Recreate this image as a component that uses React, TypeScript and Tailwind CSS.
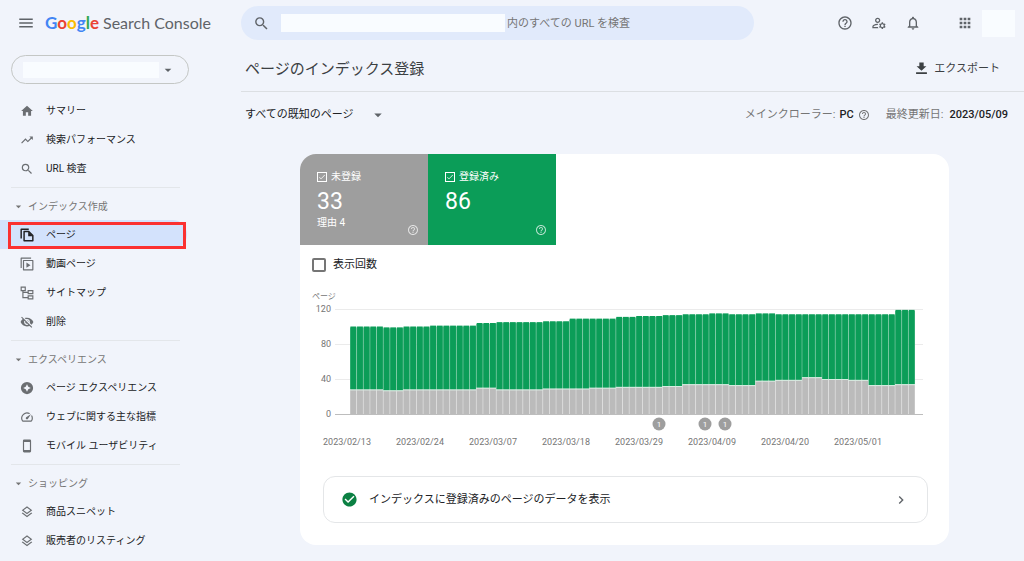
import type { ReactNode } from 'react';
import clsx from 'clsx';
import type { IconType } from 'react-icons';
import {
  MdApps,
  MdArrowDropDown,
  MdCheck,
  MdCheckCircle,
  MdChevronRight,
  MdHelpOutline,
  MdHome,
  MdMenu,
  MdNotificationsNone,
  MdOutlineLayers,
  MdOutlineManageAccounts,
  MdSearch,
  MdSpeed,
  MdTrendingUp,
  MdVisibilityOff,
} from 'react-icons/md';

type IconProps = { className?: string };

function PagesIcon({ className }: IconProps) {
  return (
    <svg className={className} viewBox="0 0 24 24" fill="none" stroke="currentColor" strokeWidth="2.500">
      <path d="M2 18V2h13" strokeLinejoin="round" />
      <path d="M7 6h8l7 7v9H7z" strokeLinejoin="round" />
      <path d="M14 6v8h8z" fill="currentColor" stroke="none" />
    </svg>
  );
}

function VideoPagesIcon({ className }: IconProps) {
  return (
    <svg className={className} viewBox="0 0 24 24" fill="none" stroke="currentColor" strokeWidth="2">
      <path d="M2 19V2h17" strokeLinejoin="round" />
      <path d="M6 6h16v16H6z" strokeLinejoin="round" />
      <path d="M11 9.500v9l7-4.500z" fill="currentColor" stroke="none" />
    </svg>
  );
}

function SitemapIcon({ className }: IconProps) {
  return (
    <svg className={className} viewBox="0 0 24 24" fill="none" stroke="currentColor" strokeWidth="2">
      <path d="M2 2h7v6H2z" />
      <path d="M14 8h8v5h-8z" />
      <path d="M14 17h8v5h-8z" />
      <path d="M5 8v12h9M5 11h9" />
    </svg>
  );
}

function ExperienceIcon({ className }: IconProps) {
  return (
    <svg className={className} viewBox="0 0 24 24" fill="currentColor">
      <path
        fillRule="evenodd"
        d="M12 1.500a10.500 10.500 0 1 0 0 21 10.500 10.500 0 0 0 0-21Zm0 4 2.200 4.300L18.500 12l-4.300 2.200L12 18.500l-2.200-4.300L5.500 12l4.300-2.200Z"
      />
    </svg>
  );
}

function PhoneIcon({ className }: IconProps) {
  return (
    <svg className={className} viewBox="0 0 24 24" fill="currentColor">
      <path
        fillRule="evenodd"
        d="M7 1h10a2 2 0 0 1 2 2v18a2 2 0 0 1-2 2H7a2 2 0 0 1-2-2V3a2 2 0 0 1 2-2Zm0 4v14h10V5Z"
      />
    </svg>
  );
}

function DownloadIcon({ className }: IconProps) {
  return (
    <svg className={className} viewBox="0 0 24 24" fill="currentColor">
      <path d="M21 8h-5V1H8v7H3l9 8zM2 19v3h20v-3z" />
    </svg>
  );
}

type NavItem = { label: string; icon: IconType | ((p: IconProps) => ReactNode); active?: boolean };
type NavGroup = { title?: string; items: NavItem[] };

const NAV: NavGroup[] = [
  {
    items: [
      { label: 'サマリー', icon: MdHome },
      { label: '検索パフォーマンス', icon: MdTrendingUp },
      { label: 'URL 検査', icon: MdSearch },
    ],
  },
  {
    title: 'インデックス作成',
    items: [
      { label: 'ページ', icon: PagesIcon, active: true },
      { label: '動画ページ', icon: VideoPagesIcon },
      { label: 'サイトマップ', icon: SitemapIcon },
      { label: '削除', icon: MdVisibilityOff },
    ],
  },
  {
    title: 'エクスペリエンス',
    items: [
      { label: 'ページ エクスペリエンス', icon: ExperienceIcon },
      { label: 'ウェブに関する主な指標', icon: MdSpeed },
      { label: 'モバイル ユーザビリティ', icon: PhoneIcon },
    ],
  },
  {
    title: 'ショッピング',
    items: [
      { label: '商品スニペット', icon: MdOutlineLayers },
      { label: '販売者のリスティング', icon: MdOutlineLayers },
    ],
  },
];

// [days, total pages, not indexed]
const RUNS = [
  [5, 100, 28],
  [3, 99, 27],
  [4, 100, 28],
  [7, 101, 28],
  [3, 104, 30],
  [7, 105, 28],
  [4, 106, 29],
  [3, 109, 29],
  [4, 109, 30],
  [3, 111, 31],
  [4, 112, 31],
  [3, 113, 32],
  [4, 114, 34],
  [3, 115, 34],
  [4, 114, 33],
  [3, 115, 38],
  [4, 114, 39],
  [3, 114, 42],
  [4, 114, 40],
  [3, 114, 39],
  [4, 114, 33],
  [3, 119, 34],
];

const DAYS = RUNS.flatMap(([n, total, missing]) => Array.from({ length: n }, () => ({ total, missing })));

const DATES = [
  '2023/02/13',
  '2023/02/24',
  '2023/03/07',
  '2023/03/18',
  '2023/03/29',
  '2023/04/09',
  '2023/04/20',
  '2023/05/01',
];

const LEFT = 50;
const STEP = 565 / 85;
const BASE = 126;
const UNIT = 105 / 120;

function IndexChart() {
  return (
    <svg
      viewBox="0 0 649 160"
      className="mt-[15px] block w-full font-[Roboto,'Noto_Sans_CJK_JP',sans-serif]"
      role="img"
      aria-label="ページ"
    >
      <text x="12" y="11" fontSize="8" fill="#757575">
        ページ
      </text>
      {[0, 40, 80, 120].map((v) => (
        <g key={v}>
          <text x="31" y={BASE - v * UNIT + 3} fontSize="9" fill="#757575" textAnchor="end">
            {v}
          </text>
          <rect x="35" y={BASE - v * UNIT} width="588" height="1" fill={v ? '#ebebeb' : '#bdbdbd'} />
        </g>
      ))}
      {DAYS.map((d, i) => {
        const x = LEFT + i * STEP;
        const top = BASE - d.total * UNIT;
        const mid = BASE - d.missing * UNIT;
        return (
          <g key={i}>
            <rect x={x} y={top + 1} width={STEP} height={mid - top - 1} fill="#6dc39a" />
            <rect x={x} y={mid} width={STEP} height={BASE - mid} fill="#dadada" />
            <rect x={x + 0.4} y={top} width={STEP - 0.8} height={mid - top} fill="#0b9d58" />
            <rect x={x} y={mid} width={STEP} height="1" fill="#d5eee1" />
            <rect x={x + 0.4} y={mid + 1} width={STEP - 0.8} height={BASE - mid - 1} fill="#bbbbbb" />
          </g>
        );
      })}
      {[359, 405, 425].map((x) => (
        <g key={x}>
          <circle cx={x} cy="136" r="6.500" fill="#9e9e9e" />
          <text x={x} y="139" fontSize="8" fill="#fff" textAnchor="middle">
            1
          </text>
        </g>
      ))}
      {DATES.map((d, i) => (
        <text key={d} x={47 + i * 73} y="157" fontSize="9" fill="#757575" textAnchor="middle">
          {d}
        </text>
      ))}
    </svg>
  );
}

function IconButton({ label, icon: Icon }: { label: string; icon: IconType }) {
  return (
    <button type="button" aria-label={label} className="flex size-[18px] items-center justify-center">
      <Icon className="size-4" />
    </button>
  );
}

function Header() {
  return (
    <header className="flex h-[46px] items-center text-[#5f6368]">
      <div className="flex w-[241px] shrink-0 items-center gap-[10px] pl-[17px]">
        <button type="button" aria-label="メニュー">
          <MdMenu className="size-[18px]" />
        </button>
        <a href="#" className="flex items-center gap-1 font-[Lato,sans-serif] leading-6 whitespace-nowrap">
          <span className="text-[17px] font-bold">
            <span className="text-[#4285f4]">G</span>
            <span className="text-[#ea4335]">o</span>
            <span className="text-[#fbbc05]">o</span>
            <span className="text-[#4285f4]">g</span>
            <span className="text-[#34a853]">l</span>
            <span className="text-[#ea4335]">e</span>
          </span>
          <span className="text-base">Search Console</span>
        </a>
      </div>
      <label className="flex h-[34px] max-w-[513px] flex-1 items-center rounded-full bg-[#e1eafb] pl-3">
        <MdSearch className="size-[17px] shrink-0" />
        <span className="ml-[11px] h-[18px] w-[224px] shrink-0 bg-[#f9fcff]" />
        <input
          type="text"
          aria-label="URL を検査"
          placeholder="内のすべての URL を検査"
          className="ml-0.5 h-[18px] min-w-0 flex-1 bg-transparent text-[11px] outline-none placeholder:text-[#757575]"
        />
      </label>
      <div className="ml-auto flex items-center gap-4 pr-[9px]">
        <IconButton label="ヘルプ" icon={MdHelpOutline} />
        <IconButton label="ユーザー設定" icon={MdOutlineManageAccounts} />
        <IconButton label="通知" icon={MdNotificationsNone} />
        <div className="ml-[18px] flex items-center gap-2">
          <IconButton label="アプリ" icon={MdApps} />
          <span className="h-[27px] w-[33px] bg-[#f9fcff]" />
        </div>
      </div>
    </header>
  );
}

function Sidebar() {
  return (
    <nav className="w-[241px] shrink-0 pt-[9px]">
      <button
        type="button"
        aria-label="プロパティを選択"
        className="mb-3 ml-[11px] flex h-[29px] w-[178px] items-center justify-between rounded-full border border-[#c4c7c5] pr-3 pl-[11px]"
      >
        <span className="h-4 w-[136px] bg-[#f9fcff]" />
        <MdArrowDropDown className="size-4 text-[#5f6368]" />
      </button>
      {NAV.map((group, i) => (
        <div key={i}>
          {group.title && (
            <div className="mt-1 ml-[11px] w-[169px] border-t border-[#e3e6ea] pt-1">
              <button type="button" className="flex h-7 items-center gap-[3px] pl-px text-[10px] text-[#757575]">
                <MdArrowDropDown className="size-[13px]" />
                {group.title}
              </button>
            </div>
          )}
          <ul>
            {group.items.map(({ label, icon: Icon, active }) => (
              <li key={label} className="relative w-[187px]">
                <a
                  href="#"
                  aria-current={active ? 'page' : undefined}
                  className={clsx(
                    'flex h-[29px] items-center gap-3 rounded-r-full pl-5 text-[10px] text-[#202124]',
                    active && 'bg-[#d3e2fc]',
                  )}
                >
                  <Icon className={clsx('size-[14px]', active ? 'text-[#202124]' : 'text-[#6b6e72]')} />
                  {label}
                </a>
                {active && (
                  <span className="pointer-events-none absolute top-0.5 right-px bottom-0 left-2 border-[3px] border-[#fb3131]" />
                )}
              </li>
            ))}
          </ul>
        </div>
      ))}
    </nav>
  );
}

type TileProps = { label: string; value: number; note?: string; color: string };

function StatTile({ label, value, note, color }: TileProps) {
  return (
    <div className={clsx('relative h-[91px] w-32 pt-[15px] pl-[17px] text-[10px] text-white', color)}>
      <label className="flex h-[15px] items-center gap-1">
        <span className="grid place-items-center">
          <input
            type="checkbox"
            defaultChecked
            className="peer col-start-1 row-start-1 size-[10px] appearance-none border border-white"
          />
          <MdCheck className="pointer-events-none col-start-1 row-start-1 hidden size-2 peer-checked:block" />
        </span>
        {label}
      </label>
      <p className="mt-1 text-[23px] leading-7">{value}</p>
      {note && <p className="leading-[14px]">{note}</p>}
      <button type="button" aria-label={`${label}のヘルプ`} className="absolute right-[9px] bottom-[9px] opacity-70">
        <MdHelpOutline className="size-3" />
      </button>
    </div>
  );
}

export default function App() {
  return (
    <div className="min-h-screen bg-[#f1f4fb] font-[Roboto,'Noto_Sans_CJK_JP',sans-serif] text-[#3c4043]">
      <Header />
      <div className="flex">
        <Sidebar />
        <main className="min-w-0 flex-1">
          <div className="flex h-[46px] items-center justify-between border-b border-[#dcdfe3] pr-6 pl-1">
            <h1 className="text-[15px] leading-6">ページのインデックス登録</h1>
            <button type="button" className="flex items-center gap-1.5 text-[11px] leading-[18px]">
              <DownloadIcon className="size-[13px]" />
              エクスポート
            </button>
          </div>

          <div className="flex h-[45px] items-center justify-between pr-4 pl-1 text-[11px] leading-[18px]">
            <button type="button" className="flex items-center gap-[15px] text-[#202124]">
              すべての既知のページ
              <MdArrowDropDown className="size-[18px] text-[#5f6368]" />
            </button>
            <div className="flex items-center gap-4 text-[#757575]">
              <p className="flex items-center gap-1">
                メインクローラー: <span className="font-medium text-[#202124]">PC</span>
                <MdHelpOutline className="size-3" />
              </p>
              <p className="flex items-center gap-1.5">
                最終更新日: <span className="font-medium text-[#202124]">2023/05/09</span>
              </p>
            </div>
          </div>

          <section className="mt-[17px] mr-[75px] ml-[59px] overflow-hidden rounded-2xl bg-white pb-[22px]">
            <div className="flex">
              <StatTile label="未登録" value={33} note="理由 4" color="bg-[#9e9e9e]" />
              <StatTile label="登録済み" value={86} color="bg-[#0b9d58]" />
            </div>
            <label className="mt-3 ml-3 flex h-4 w-fit items-center gap-[7px] text-[11px] leading-4 text-[#202124]">
              <input type="checkbox" className="size-[14px] appearance-none rounded-xs border-2 border-[#757575]" />
              表示回数
            </label>

            <IndexChart />

            <a
              href="#"
              className="mt-7 mr-[21px] ml-[23px] flex h-[47px] items-center rounded-xl border border-[#e4e6e8] pr-[18px] pl-[17px] text-[11px] leading-[18px] text-[#202124]"
            >
              <MdCheckCircle className="size-[17px] text-[#0b8043]" />
              <span className="ml-[11px]">インデックスに登録済みのページのデータを表示</span>
              <MdChevronRight className="ml-auto size-4 text-[#5f6368]" />
            </a>
          </section>
        </main>
      </div>
    </div>
  );
}
